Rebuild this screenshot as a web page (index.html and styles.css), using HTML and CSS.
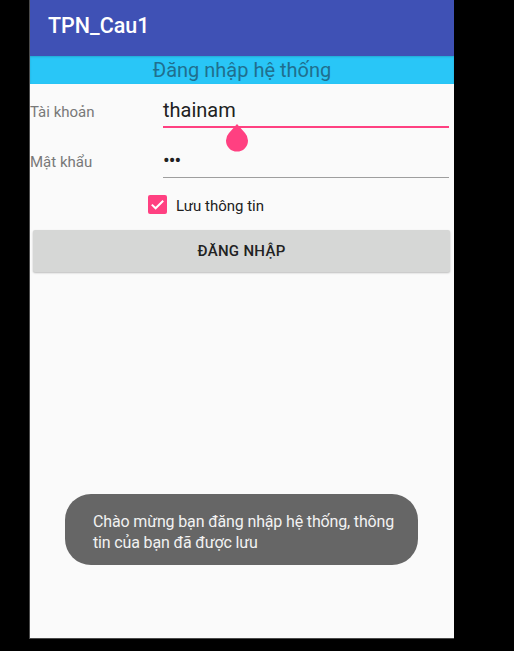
FILE: index.html
```html
<!DOCTYPE html>
<html lang="vi">
<head>
<meta charset="utf-8">
<title>TPN_Cau1</title>
<link rel="stylesheet" href="styles.css">
</head>
<body>
<div class="screen">
  <header class="toolbar">TPN_Cau1</header>
  <div class="banner">Đăng nhập hệ thống</div>
  <div class="row row-user">
    <span class="label">Tài khoản</span>
    <div class="field field-focus">thainam</div>
    <svg class="handle" width="24" height="28" viewBox="0 0 24 28">
      <path d="M12 0 L20 9 A11 11 0 1 1 4 9 Z" fill="#ff4081"/>
    </svg>
  </div>
  <div class="row row-pass">
    <span class="label">Mật khẩu</span>
    <div class="field field-idle">•••</div>
  </div>
  <div class="check-row">
    <span class="checkbox">
      <svg width="19" height="19" viewBox="0 0 19 19"><path d="M3.8 9.6 L7.6 13.3 L15.2 5.8" fill="none" stroke="#fff" stroke-width="2"/></svg>
    </span>
    <span class="check-label">Lưu thông tin</span>
  </div>
  <button class="btn">ĐĂNG NHẬP</button>
  <div class="toast">Chào mừng bạn đăng nhập hệ thống, thông<br>tin của bạn đã được lưu</div>
</div>
</body>
</html>
```

FILE: styles.css
```css
html, body {
  margin: 0;
  padding: 0;
  background: #000;
  height: 100%;
  overflow: hidden;
}
.screen {
  position: relative;
  margin-left: 29px;
  width: 424px;
  height: 638px;
  background: #fafafa;
  border-left: 1px solid #4a4a4a;
  border-bottom: 1px solid #4a4a4a;
  font-family: Roboto, "Noto Sans", sans-serif;
  display: flex;
  flex-direction: column;
}
.toolbar {
  height: 56px;
  box-sizing: border-box;
  background: #3f51b5;
  color: #fff;
  font-size: 21.5px;
  font-weight: 500;
  line-height: 52px;
  padding-left: 18px;
  padding-bottom: 4px;
}
.banner {
  height: 28px;
  background: #29c6f7;
  color: #206f8e;
  font-size: 20px;
  line-height: 28px;
  text-align: center;
  box-shadow: inset 0 1px 2px rgba(0,0,0,0.15);
}
.row {
  position: relative;
  display: flex;
  align-items: baseline;
  margin-right: 5px;
}
.row-user { margin-top: 14px; }
.row-pass { margin-top: 20px; }
.label {
  width: 133px;
  font-size: 15px;
  color: #787878;
  flex: none;
}
.field {
  flex: 1;
  font-size: 20px;
  line-height: 24px;
  color: #212121;
}
.field-focus {
  padding-bottom: 4px;
  border-bottom: 2px solid #ff4081;
}
.field-idle {
  padding-bottom: 5px;
  border-bottom: 1px solid #9e9e9e;
  letter-spacing: -1px;
}
.handle {
  position: absolute;
  left: 195px;
  top: 26px;
}
.check-row {
  display: flex;
  align-items: center;
  margin-top: 16px;
  margin-left: 118px;
  height: 20px;
}
.checkbox {
  width: 19px;
  height: 19px;
  border-radius: 2px;
  background: #ff4081;
  display: flex;
}
.check-label {
  margin-left: 9px;
  font-size: 15px;
  color: #212121;
  position: relative;
  top: 2px;
}
.btn {
  margin: 16px 4px 0 3px;
  height: 42px;
  border: none;
  border-radius: 2px;
  background: #d6d7d6;
  box-shadow: 0 1px 2px rgba(0,0,0,0.25);
  font-family: Roboto, "Noto Sans", sans-serif;
  font-size: 15px;
  font-weight: 500;
  color: #222;
  letter-spacing: 0.3px;
  padding: 0;
}
.toast {
  position: absolute;
  left: 35px;
  top: 494px;
  width: 353px;
  height: 71px;
  box-sizing: border-box;
  padding: 17px 8px 0 28px;
  background: #666;
  border-radius: 26px;
  color: #f2f2f2;
  font-size: 16px;
  letter-spacing: -0.15px;
  line-height: 21px;
  white-space: nowrap;
}
```
